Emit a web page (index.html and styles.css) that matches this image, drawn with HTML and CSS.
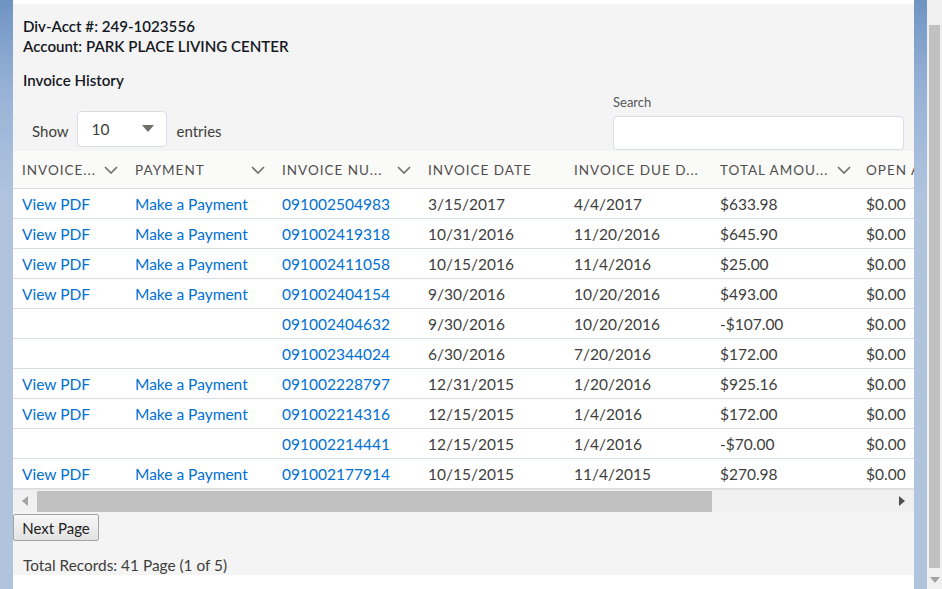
FILE: index.html
```html
<!DOCTYPE html>
<html lang="en">
<head>
  <meta charset="UTF-8" />
  <title>Invoice History</title>
  <link rel="stylesheet" href="styles.css">
</head>
<body>
  <div class="frame">
    <div class="edge"></div>

    <div class="main">
      <div class="panel">
        <div class="info">
          <div class="line">Div-Acct #: 249-1023556</div>
          <div class="line">Account: PARK PLACE LIVING CENTER</div>
          <div class="title">Invoice History</div>
        </div>

        <div class="controls">
          <div class="show">
            <span class="word">Show</span>
            <div class="select">
              <span>10</span>
              <svg width="12" height="8" viewBox="0 0 12 8"><path d="M0 0h12L6 7z" fill="#706e6b"/></svg>
            </div>
            <span class="word">entries</span>
          </div>
          <div class="search">
            <label>Search</label>
            <div class="search-box"></div>
          </div>
        </div>

        <div class="table-wrap">
          <table class="invoices">
            <colgroup>
              <col class="c1"><col class="c2"><col class="cw"><col class="cw"><col class="cw"><col class="cw"><col class="cw">
            </colgroup>
            <thead>
              <tr>
                <th><div class="th"><span class="lbl">Invoice...</span><svg class="chev" viewBox="0 0 14 8"><path d="M1 1l6 6 6-6" fill="none" stroke="#706e6b" stroke-width="1.6"/></svg></div></th>
                <th><div class="th"><span class="lbl">Payment</span><svg class="chev" viewBox="0 0 14 8"><path d="M1 1l6 6 6-6" fill="none" stroke="#706e6b" stroke-width="1.6"/></svg></div></th>
                <th><div class="th"><span class="lbl">Invoice Nu...</span><svg class="chev" viewBox="0 0 14 8"><path d="M1 1l6 6 6-6" fill="none" stroke="#706e6b" stroke-width="1.6"/></svg></div></th>
                <th><div class="th"><span class="lbl">Invoice Date</span></div></th>
                <th><div class="th"><span class="lbl">Invoice Due D...</span></div></th>
                <th><div class="th th-total"><span class="lbl">Total Amou...</span><svg class="chev" viewBox="0 0 14 8"><path d="M1 1l6 6 6-6" fill="none" stroke="#706e6b" stroke-width="1.6"/></svg></div></th>
                <th><div class="th"><span class="lbl">Open A</span></div></th>
              </tr>
            </thead>
            <tbody>
              <tr><td><a>View PDF</a></td><td><a>Make a Payment</a></td><td><a>091002504983</a></td><td>3/15/2017</td><td>4/4/2017</td><td>$633.98</td><td>$0.00</td></tr>
              <tr><td><a>View PDF</a></td><td><a>Make a Payment</a></td><td><a>091002419318</a></td><td>10/31/2016</td><td>11/20/2016</td><td>$645.90</td><td>$0.00</td></tr>
              <tr><td><a>View PDF</a></td><td><a>Make a Payment</a></td><td><a>091002411058</a></td><td>10/15/2016</td><td>11/4/2016</td><td>$25.00</td><td>$0.00</td></tr>
              <tr><td><a>View PDF</a></td><td><a>Make a Payment</a></td><td><a>091002404154</a></td><td>9/30/2016</td><td>10/20/2016</td><td>$493.00</td><td>$0.00</td></tr>
              <tr><td></td><td></td><td><a>091002404632</a></td><td>9/30/2016</td><td>10/20/2016</td><td>-$107.00</td><td>$0.00</td></tr>
              <tr><td></td><td></td><td><a>091002344024</a></td><td>6/30/2016</td><td>7/20/2016</td><td>$172.00</td><td>$0.00</td></tr>
              <tr><td><a>View PDF</a></td><td><a>Make a Payment</a></td><td><a>091002228797</a></td><td>12/31/2015</td><td>1/20/2016</td><td>$925.16</td><td>$0.00</td></tr>
              <tr><td><a>View PDF</a></td><td><a>Make a Payment</a></td><td><a>091002214316</a></td><td>12/15/2015</td><td>1/4/2016</td><td>$172.00</td><td>$0.00</td></tr>
              <tr><td></td><td></td><td><a>091002214441</a></td><td>12/15/2015</td><td>1/4/2016</td><td>-$70.00</td><td>$0.00</td></tr>
              <tr><td><a>View PDF</a></td><td><a>Make a Payment</a></td><td><a>091002177914</a></td><td>10/15/2015</td><td>11/4/2015</td><td>$270.98</td><td>$0.00</td></tr>
            </tbody>
          </table>
        </div>

        <div class="hscroll">
          <svg class="arrow" width="6" height="10" viewBox="0 0 6 10"><path d="M6 0v10L0 5z" fill="#a3a3a3"/></svg>
          <div class="hthumb"></div>
          <div class="htrack"></div>
          <svg class="arrow" width="6" height="10" viewBox="0 0 6 10"><path d="M0 0v10l6-5z" fill="#505050"/></svg>
        </div>

        <button class="next">Next Page</button>
        <div class="total">Total Records: 41 Page (1 of 5)</div>
      </div>
    </div>

    <div class="edge"></div>

    <div class="vscroll">
      <div class="vthumb"></div>
      <svg class="down" width="10" height="6" viewBox="0 0 10 6"><path d="M0 0h10L5 6z" fill="#a3a3a3"/></svg>
    </div>
  </div>
</body>
</html>
```

FILE: styles.css
```css
body { margin: 0; background: #fff; font-family: Lato, "Open Sans", sans-serif; color: #3e3e3c; }

.frame { display: flex; width: 942px; height: 589px; overflow: hidden; }

.edge {
  width: 13px; flex: none;
  background: linear-gradient(#6f94c3 0, #98b2d6 90px, #b0c4de 200px, #b0c4de 100%);
}

.main { width: 901px; flex: none; background: #fff; padding-top: 4px; }
.panel { background: #f4f4f4; height: 571px; display: flex; flex-direction: column; }

.info { padding: 12px 10px 0; font-size: 15.1px; color: #16191f; }
.info .line { line-height: 20px; font-weight: 600; }
.info .title { margin-top: 14px; line-height: 20px; font-weight: 600; }

.controls {
  display: flex; justify-content: space-between; align-items: flex-end;
  padding: 0 10px 1px 19px; height: 61px; box-sizing: border-box;
}
.show { display: flex; align-items: center; font-size: 15px; margin-bottom: 3px; }
.show .word { padding-top: 4px; }
.select {
  width: 90px; height: 36px; box-sizing: border-box; background: #fff;
  border: 1px solid #d8dde6; border-radius: 4px; margin: 0 10px 0 8px;
  display: flex; justify-content: space-between; align-items: center;
  padding: 0 12px 0 14px; font-size: 15.5px;
}
.search { display: flex; flex-direction: column; }
.search label { font-size: 13px; color: #54565a; margin-bottom: 6px; }
.search-box {
  width: 291px; height: 34px; box-sizing: border-box; background: #fff;
  border: 1px solid #d8dde6; border-radius: 4px;
}

.table-wrap { width: 901px; overflow: hidden; background: #fff; }
.invoices { border-collapse: collapse; table-layout: fixed; width: 990px; font-size: 15.5px; }
.c1 { width: 113px; }
.c2 { width: 147px; }
.cw { width: 146px; }
.invoices th {
  height: 37px; padding: 0; text-align: left; font-weight: 400;
  background: #fafaf9; border-bottom: 1px solid #d8dde6;
}
.th { display: flex; align-items: center; padding: 0 8px 0 9px; }
.lbl {
  flex: none; white-space: nowrap;
  text-transform: uppercase; font-size: 13.5px; letter-spacing: 1px; color: #514f4d;
}
.chev { width: 14px; height: 8px; flex: none; margin-left: auto; }
.th-total .chev { margin-left: 9px; }
.invoices td {
  height: 29px; padding: 0 0 0 9px; white-space: nowrap; overflow: hidden;
  border-bottom: 1px solid #d8dde6; color: #3e3e3c;
}
.invoices a { color: #0070d2; text-decoration: none; }

.hscroll {
  display: flex; align-items: center; height: 23px; background: #f0f0f0;
  border-top: 1px solid #e3e3e3; box-sizing: border-box;
}
.hscroll .arrow { flex: none; margin: 0 9px; }
.hthumb { width: 675px; height: 21px; background: #c1c1c1; }
.htrack { flex: 1; }

.next {
  align-self: flex-start; margin-top: 2px; width: 86px; height: 27px;
  font-family: Lato, "Open Sans", sans-serif; font-size: 15px; color: #222;
  background: linear-gradient(#f7f7f7, #e2e2e2); border: 1px solid #a3a3a3; border-radius: 2px;
  padding: 0;
}
.total { margin-top: 15px; padding-left: 10px; font-size: 15.4px; }

.vscroll {
  width: 15px; flex: none; background: #f0f0f0; position: relative;
}
.vthumb { margin: 25px 2px 0 2px; height: 543px; background: #c1c1c1; }
.down { position: absolute; left: 3px; bottom: 6px; }
```
